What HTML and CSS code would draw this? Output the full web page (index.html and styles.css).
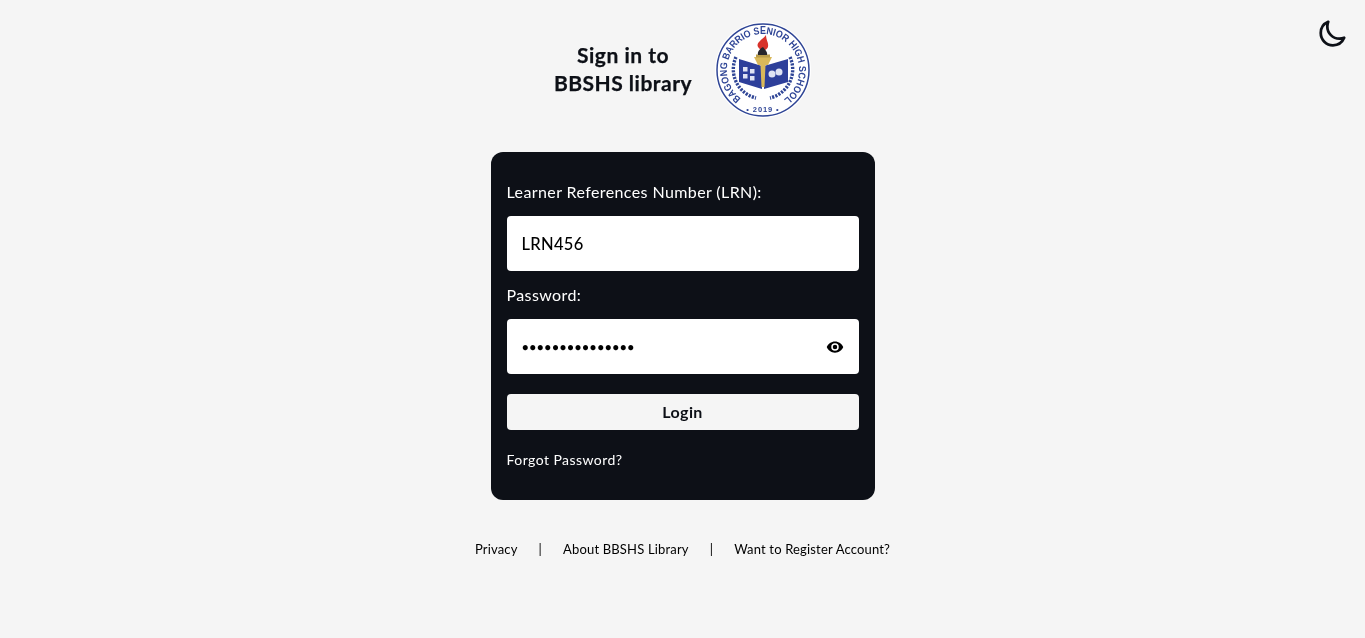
FILE: index.html
```html
<!DOCTYPE html>
<html lang="en">
<head>
<meta charset="utf-8">
<title>Sign in to BBSHS library</title>
<link rel="stylesheet" href="styles.css">
</head>
<body>
<button class="theme" aria-label="Toggle theme">
  <svg viewBox="0 0 24 24" width="30" height="30" fill="none" stroke="#0d1017" stroke-width="2.2" stroke-linecap="round" stroke-linejoin="round"><path d="M21.752 15.002A9.718 9.718 0 0 1 18 15.75c-5.385 0-9.75-4.365-9.75-9.75 0-1.33.266-2.597.748-3.752A9.753 9.753 0 0 0 3 11.25C3 16.635 7.365 21 12.75 21a9.753 9.753 0 0 0 9.002-5.998z"/></svg>
</button>
<main class="page">
  <header class="brand">
    <h1 class="brand-title">Sign in to<br>BBSHS library</h1>
    <svg class="logo" viewBox="0 0 96 96" width="96" height="96">
      <defs>
        <path id="arcRing" d="M26 76.5A36 36 0 1 1 70 76.5"/>
      </defs>
      <circle cx="48" cy="48" r="48" fill="#fff"/>
      <circle cx="48" cy="48" r="46" fill="none" stroke="#2f4596" stroke-width="1.5"/>
      <text class="logo-text"><textPath href="#arcRing" textLength="180" lengthAdjust="spacingAndGlyphs">BAGONG BARRIO SENIOR HIGH SCHOOL</textPath></text>
      <text class="logo-year" x="48" y="90" text-anchor="middle">• 2019 •</text>
      <g fill="none" stroke="#2f4596" stroke-width="3.4" stroke-dasharray="2.2 1.2">
        <path d="M21 35A29.500 29.500 0 0 0 41 76"/>
        <path d="M75 35A29.500 29.500 0 0 1 55 76"/>
      </g>
      <path d="M24 37L47 44V67L24 60Z" fill="#2d3f9a"/>
      <path d="M73 37L49 44V67L73 60Z" fill="#2d3f9a"/>
      <g fill="#dfe3f3">
        <rect x="28" y="45" width="4.500" height="4.500"/><rect x="35" y="47" width="4.500" height="4.500"/>
        <rect x="28" y="52" width="4.500" height="4.500"/><rect x="35" y="54" width="4.500" height="4.500"/>
        <circle cx="57" cy="52" r="3.500"/><circle cx="64" cy="50" r="3.500"/>
      </g>
      <path d="M39 35H57L53 43H50.500L49.500 65H46.500L45.500 43H43Z" fill="#d9b85a"/>
      <rect x="41" y="32.500" width="14" height="3" fill="#b99c4a"/>
      <path d="M47 28C42 26 41 22 45 19C46 17 49 16 51 13C51 18 54 21 53 25C52 27 50 29 47 28Z" fill="#d8322a"/>
      <path d="M43 33C42 29 46 26 48 25C50 28 53 30 52 33Z" fill="#27262c"/>
    </svg>
  </header>
  <form class="card">
    <label class="label" for="lrn">Learner References Number (LRN):</label>
    <div class="field"><input id="lrn" class="input" value="LRN456"></div>
    <label class="label" for="pw">Password:</label>
    <div class="field">
      <input id="pw" class="input input-secret" type="password" value="123456789012345">
      <svg class="eye" viewBox="0 0 24 24" width="18" height="18"><path fill="#000" d="M12 4.5C7 4.5 2.73 7.61 1 12c1.73 4.39 6 7.5 11 7.5s9.27-3.11 11-7.5c-1.73-4.39-6-7.5-11-7.5zM12 17a5 5 0 1 1 0-10 5 5 0 0 1 0 10zm0-8a3 3 0 1 0 0 6 3 3 0 0 0 0-6z"/></svg>
    </div>
    <button class="login" type="button">Login</button>
    <a class="forgot" href="#">Forgot Password?</a>
  </form>
  <nav class="links">
    <a href="#">Privacy</a><span>|</span><a href="#">About BBSHS Library</a><span>|</span><a href="#">Want to Register Account?</a>
  </nav>
</main>
</body>
</html>
```
FILE: styles.css
```css
* { box-sizing: border-box; }
html, body { margin: 0; height: 100%; }
body {
  background: #f5f5f5;
  color: #000;
  font-family: "Lato", "Noto Sans", sans-serif;
  overflow: hidden;
}
.theme {
  position: absolute;
  top: 19px;
  right: 18px;
  padding: 0;
  width: 30px;
  height: 30px;
  border: 0;
  background: none;
}
.theme svg { display: block; }
.page {
  display: flex;
  flex-direction: column;
  align-items: center;
  padding-top: 22px;
  will-change: transform;
}
.brand {
  display: flex;
  align-items: center;
  gap: 23px;
  height: 96px;
  margin-bottom: 34px;
}
.brand-title {
  margin: -2px 0 0;
  text-align: center;
  font-size: 21px;
  line-height: 28px;
  letter-spacing: .5px;
  font-weight: 700;
  -webkit-text-stroke: .25px #0d1017;
  color: #0d1017;
}
.logo { display: block; filter: blur(.35px); }
.logo-text { font-size: 10px; font-weight: 700; fill: #2f4596; font-family: "Liberation Sans", sans-serif; }
.logo-year { font-size: 7.5px; font-weight: 700; fill: #2f4596; letter-spacing: .9px; font-family: "Liberation Sans", sans-serif; }
.card {
  display: flex;
  flex-direction: column;
  width: 384px;
  height: 348px;
  padding: 28px 16px 0;
  background: #0d1017;
  border-radius: 12px;
}
.label {
  display: block;
  height: 24px;
  margin-bottom: 12px;
  font-size: 16px;
  line-height: 24px;
  letter-spacing: .4px;
  color: #fff;
}
.field { position: relative; margin-bottom: 12px; }
.input {
  display: block;
  width: 352px;
  height: 55px;
  padding: 0 15px;
  border: 0;
  border-radius: 4px;
  background: #fff;
  color: #000;
  font: 500 16.5px/24px "Lato", "Noto Sans", sans-serif;
  letter-spacing: .3px;
  outline: 0;
}
.input-secret { font-size: 13px; letter-spacing: 0; }
.eye { position: absolute; top: 19px; right: 15px; }
.login {
  height: 36px;
  margin-top: 8px;
  border: 0;
  border-radius: 4px;
  background: #f5f5f5;
  color: #0d1017;
  font: 700 16px/24px "Lato", "Noto Sans", sans-serif;
  letter-spacing: .4px;
}
.forgot {
  margin-top: 20px;
  font-size: 14px;
  line-height: 20px;
  letter-spacing: .45px;
  color: #fff;
  text-decoration: none;
}
.links {
  display: flex;
  gap: 21px;
  margin-top: 40px;
  font-size: 13px;
  line-height: 18px;
  letter-spacing: .17px;
}
.links a { color: #000; text-decoration: none; }
```
